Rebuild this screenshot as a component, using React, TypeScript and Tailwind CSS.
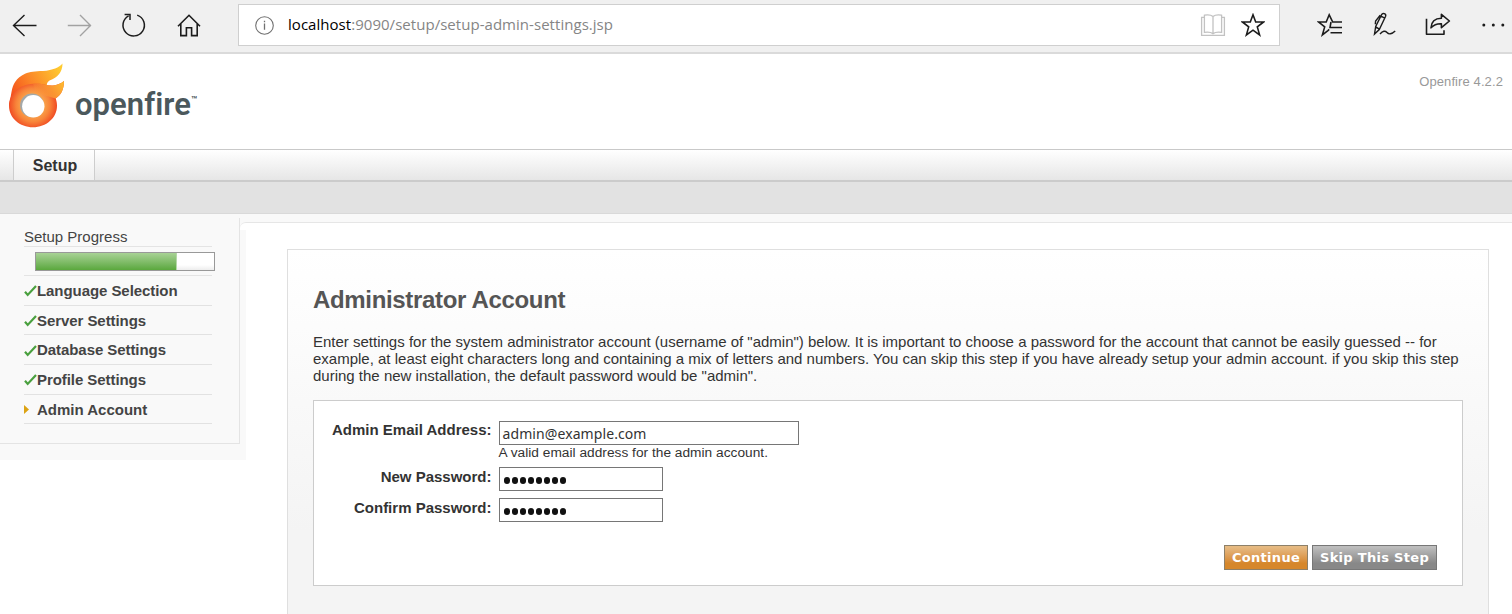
import type { ReactNode } from "react";

const star = "M12 1.8l2.7 7.2h7.9l-6.3 4.9 2.3 8-6.6-4.7-6.6 4.7 2.3-8L1.4 9h7.9z";

function BrowserBar() {
  return (
    <div className="flex h-[54px] shrink-0 items-start border-b-2 border-[#dadada] bg-[#f0f0f0] text-[#1c1c1c]">
      <svg className="mt-[13px] ml-[12px] h-6 w-[26px] shrink-0" viewBox="0 0 26 24" fill="none" stroke="currentColor" strokeWidth="1.4">
        <path d="M24.5 12.500H1.5M12.500 2L1.5 12.500 12.500 23" />
      </svg>
      <svg className="mt-[13px] ml-[29px] h-6 w-[26px] shrink-0 text-[#a2a2a2]" viewBox="0 0 26 24" fill="none" stroke="currentColor" strokeWidth="1.4">
        <path d="M.8 12.500H24M13 2l10.5 10.5L13 23" />
      </svg>
      <svg className="mt-[12px] ml-[28px] h-[26px] w-[26px] shrink-0" viewBox="0 0 26 26" fill="none" stroke="currentColor" strokeWidth="1.5">
        <path d="M16.2 3.1A10.7 10.7 0 1 1 7.600 3.800M3.600 2.500h5.400v5.400" />
      </svg>
      <svg className="mt-[13px] ml-[29px] h-6 w-[26px] shrink-0" viewBox="0 0 26 24" fill="none" stroke="currentColor" strokeWidth="1.6">
        <path d="M2 13.2L13 2.3l11 10.9M4.8 11v11.6h5.6v-7.8h5.2v7.8h5.6V11" />
      </svg>
      <div className="mt-1 ml-[36px] flex h-[42px] w-[1042px] shrink-0 items-center border border-[#cfcfcf] bg-white">
        <svg className="ml-[16px] h-5 w-5 shrink-0 text-[#707070]" viewBox="0 0 20 20" fill="none" stroke="currentColor" strokeWidth="1.1">
          <circle cx="9.500" cy="10.500" r="8.800" />
          <path d="M9.500 8.500v6.300M9.500 5.700v1.500" strokeWidth="1.300" />
        </svg>
        <span className="relative -top-px ml-[13px] font-['Open_Sans',sans-serif] text-[15px] leading-5 tracking-[0.038px] text-[#858585]">
          <span className="text-black">localhost</span>:9090/setup/setup-admin-settings.jsp
        </span>
        <svg className="ml-auto h-6 w-[26px] shrink-0 text-[#c2c2c2]" viewBox="0 0 26 24" fill="none" stroke="currentColor" strokeWidth="1.3">
          <path d="M13 3.500C11 1.800 7 1.800 4.400 2.200v17.200c3-.4 6.600-.2 8.600 1.200 2-1.400 5.600-1.600 8.600-1.200V2.200C19 1.800 15 1.800 13 3.500zM13 3.500v17M4.400 4.400H1.600v18h22.800v-18h-2.800" />
        </svg>
        <svg className="mr-[14px] ml-[15px] h-6 w-6 shrink-0" viewBox="0 0 24 24" fill="none" stroke="currentColor" strokeWidth="1.6">
          <path d={star} />
        </svg>
      </div>
      <svg className="mt-[13px] ml-[37px] h-6 w-[26px] shrink-0" viewBox="0 0 26 24" fill="none" stroke="currentColor" strokeWidth="1.6">
        <path d="M25 9h-9.300L12.200 1.800 9.200 9H1.700l6 4.900-2.300 8 5.500-4.300 1.300-1.200M14 9l-1 5.500H25M13.500 19.700H25" />
      </svg>
      <svg className="mt-[12px] ml-[29px] h-6 w-6 shrink-0" viewBox="0 0 24 24" fill="none" stroke="currentColor" strokeWidth="1.4">
        <path d="M2.500 22l1.200-7.500L9.600 2.600c1-2 4.900-1 4 1.700L7.300 17.500 2.500 22zM3.300 12.300l.300-3.300 4.600-5.700M9 4.200l3.700 1.900M3.700 14.800l3.600 2.400M8 22c2.800-3.300 5.200-3.400 7-1.500 1.700 2 4.500 2 8.200-1.500" />
      </svg>
      <svg className="mt-[13px] ml-[29px] h-6 w-[26px] shrink-0" viewBox="0 0 26 24" fill="none" stroke="currentColor" strokeWidth="1.6" strokeLinejoin="round">
        <path d="M1.500 5.700v15.500H19v-4M6 14.800C6.300 8.500 9.500 5.300 16.400 5.200V1.300l8 6.700-8 6.700v-4c-4.300-.2-7.600 1-10.400 4.100z" />
      </svg>
      <svg className="mt-[13px] ml-[30px] h-6 w-[26px] shrink-0" viewBox="0 0 26 24" fill="currentColor">
        <circle cx="2.800" cy="12" r="1.500" />
        <circle cx="12.300" cy="12" r="1.500" />
        <circle cx="21.800" cy="12" r="1.500" />
      </svg>
    </div>
  );
}

function Flame() {
  return (
    <svg className="mt-[9px] ml-2 h-[66px] w-[58px] shrink-0" viewBox="0 0 58 66">
      <defs>
        <linearGradient id="upper" gradientUnits="userSpaceOnUse" x1="4" y1="32" x2="52" y2="4">
          <stop offset="0" stopColor="#f4511c" />
          <stop offset=".4" stopColor="#fb8426" />
          <stop offset="1" stopColor="#ffcb30" />
        </linearGradient>
        <radialGradient id="ring" gradientUnits="userSpaceOnUse" cx="25" cy="42" r="24">
          <stop offset=".45" stopColor="#f9a44c" />
          <stop offset=".7" stopColor="#f8853a" />
          <stop offset="1" stopColor="#f04b23" />
        </radialGradient>
        <linearGradient id="tail" gradientUnits="userSpaceOnUse" x1="30" y1="36" x2="54" y2="20">
          <stop offset="0" stopColor="#fb9a38" stopOpacity="0" />
          <stop offset=".45" stopColor="#fb9834" stopOpacity=".85" />
          <stop offset="1" stopColor="#fdb82f" />
        </linearGradient>
      </defs>
      <path fill="url(#upper)" d="M54.500.500C51 4.500 45 7.300 35 8 27 8.300 22 8.500 17 10.800 8 15 5 21 3.500 29L1 43 20 36 40 24c-2-2.500-1-4.500 1.500-6.500C50 14.500 54.500 9 54.500.500z" />
      <path fill="url(#ring)" d="M56 18c-3 2.500-7 4.200-11 4.500-7 .3-12-2.500-20-1.800C11 21.500 1 31 1 42.800 1 55 11.800 64.300 25 64.300s24-9.300 24-21.500c0-3-.5-5-1.300-7.300C53 32 56 26.500 56 18z" />
      <path fill="url(#tail)" d="M56 18c-3 2.500-7 4.200-11 4.500-7 .3-12-2.500-20-1.800L28 30l19.700 5.500C53 32 56 26.500 56 18z" />
      <circle cx="24" cy="42.300" r="11.900" fill="#a3a8a9" />
      <circle cx="25.300" cy="43.300" r="11.200" fill="#fff" />
    </svg>
  );
}

function Step({ children }: { children: string }) {
  return (
    <li className="flex h-[29.7px] items-center border-b border-[#e2e2e2]">
      <svg className="mt-[2px] h-3 w-[13px] shrink-0" viewBox="0 0 13 12" fill="none" stroke="#4aa03f" strokeWidth="2.200">
        <path d="M1 6.700l2.700 3.200L12 1" />
      </svg>
      <span className="mt-[2px] tracking-[-0.065px] whitespace-nowrap">{children}</span>
    </li>
  );
}

function Sidebar() {
  return (
    <div className="h-[246px] w-[240px] shrink-0 bg-[#f9f9f9] pt-1">
      <div className="h-[226px] border-r border-b border-[#e4e4e4] pl-6 text-[15px] text-[#444]">
        <div className="w-[188px]">
          <div className="flex h-[29px] items-end border-b border-[#e4e4e4] leading-[18px]">Setup Progress</div>
          <div className="h-[29px] border-b border-[#e4e4e4] pt-[5px] pl-[11px]">
            <div className="h-[19px] w-[180px] border border-[#999] bg-gradient-to-b from-white from-70% to-[#ededed]">
              <div className="h-full w-[141px] border-r border-[#b5d8a8] bg-gradient-to-b from-[#a8d295] to-[#5aa83c]" />
            </div>
          </div>
          <ul className="font-bold">
            <Step>Language Selection</Step>
            <Step>Server Settings</Step>
            <Step>Database Settings</Step>
            <Step>Profile Settings</Step>
            <li className="flex h-[29.7px] items-center border-b border-[#e2e2e2]">
              <svg className="h-[9px] w-[5px]" viewBox="0 0 5 9" fill="#dca314">
                <path d="M0 0l5 4.500L0 9z" />
              </svg>
              <span className="mt-[2px] ml-[8px]">Admin Account</span>
            </li>
          </ul>
        </div>
      </div>
    </div>
  );
}

function Row({ label, children, className }: { label: string; children: ReactNode; className: string }) {
  return (
    <div className={`flex ${className}`}>
      <label className="w-[177.500px] shrink-0 text-right text-[15px] leading-[18px] font-bold text-[#333]">{label}</label>
      <div className="ml-[7px]">{children}</div>
    </div>
  );
}

function Password() {
  return (
    <div className="flex h-6 w-[164px] items-center gap-[2px] border border-[#767676] bg-white pt-[2px] pl-1">
      {Array.from({ length: 8 }, (_, i) => (
        <span key={i} className="h-[7px] w-[6px] rounded-full bg-[#111]" />
      ))}
    </div>
  );
}

export default function App() {
  return (
    <div className="flex h-[614px] w-[1512px] flex-col overflow-hidden bg-white font-['Liberation_Sans',Arial,sans-serif]">
      <BrowserBar />
      <header className="flex h-[95px] shrink-0">
        <Flame />
        <div className="mt-[33px] ml-[9px] flex font-[Roboto,sans-serif] text-[#4b585c]">
          <span className="text-[31px] leading-9 font-semibold tracking-[0.050px]">openfire</span>
          <span className="mt-[7px] text-[10px] leading-3 font-bold">™</span>
        </div>
        <span className="mt-[20px] mr-[9px] ml-auto text-[13px] leading-4 tracking-[0.100px] text-[#999]">Openfire 4.2.2</span>
      </header>
      <nav className="flex h-[33px] shrink-0 border-t border-b-2 border-t-[#c9c9c9] border-b-[#cbcbcb] bg-gradient-to-b from-white to-[#e6e6e6]">
        <div className="ml-[13px] flex w-[82px] items-center justify-center border-x border-[#cdcdcd] bg-gradient-to-b from-white to-[#f0f0f0] pt-[2px] pl-[2px] text-[16px] font-bold text-[#333]">
          Setup
        </div>
      </nav>
      <div className="h-8 shrink-0 border-b border-[#d9d9d9] bg-[#e2e2e2]" />
      <div className="flex flex-1 items-start bg-[linear-gradient(#f9f9f9_0_14px,#fff_14px)]">
        <Sidebar />
        <main className="mt-2 flex flex-1 items-start rounded-tl-[6px] border-t border-[#e6e6e6] bg-white">
          <div className="mt-[7px] h-[230px] w-[6px] shrink-0 bg-[#f9f9f9]" />
          <section className="mt-[26px] ml-[41px] h-[400px] w-[1202px] shrink-0 border border-[#dfdfdf] bg-[linear-gradient(#fff,#f4f4f4_280px)] pl-[25px]">
            <h1 className="mt-[35px] text-[24px] leading-[30px] font-bold tracking-[-0.330px] text-[#555]">Administrator Account</h1>
            <p className="mt-[18px] text-[15px] leading-[17px] whitespace-nowrap text-[#333]">
              Enter settings for the system administrator account (username of "admin") below. It is important to choose a password for the account that cannot be easily guessed -- for
              <br />
              example, at least eight characters long and containing a mix of letters and numbers. You can skip this step if you have already setup your admin account. if you skip this step
              <br />
              during the new installation, the default password would be "admin".
            </p>
            <form className="mt-4 h-[186px] w-[1150px] border border-[#ccc] bg-white">
              <Row label="Admin Email Address:" className="h-[66px] pt-5">
                <div className="flex h-6 w-[300px] items-center border border-[#767676] bg-white pt-px pl-[3px] font-['Noto_Sans',sans-serif] text-[14px] leading-5 tracking-[0.090px] text-[#333]">
                  admin@example.com
                </div>
                <div className="text-[13.700px] leading-[15px] tracking-[0.020px] text-[#333]">A valid email address for the admin account.</div>
              </Row>
              <Row label="New Password:" className="h-[31px] [&>label]:pt-px">
                <Password />
              </Row>
              <Row label="Confirm Password:" className="h-[47px] [&>label]:pt-px">
                <Password />
              </Row>
              <div className="mr-[25px] flex justify-end gap-1 font-['DejaVu_Sans',Verdana,sans-serif] text-[13px] font-bold text-white">
                <button type="button" className="h-[25px] w-[84px] border border-[#8d8069] bg-gradient-to-b from-[#e6ba82] from-5% to-[#d6872b] to-75% leading-[23px] tracking-[0.300px]">
                  Continue
                </button>
                <button type="button" className="h-[25px] w-[125px] border border-[#777] bg-gradient-to-b from-[#bdbdbd] from-5% to-[#888] to-75% leading-[23px] tracking-[0.300px] whitespace-nowrap">
                  Skip This Step
                </button>
              </div>
            </form>
          </section>
        </main>
      </div>
    </div>
  );
}
